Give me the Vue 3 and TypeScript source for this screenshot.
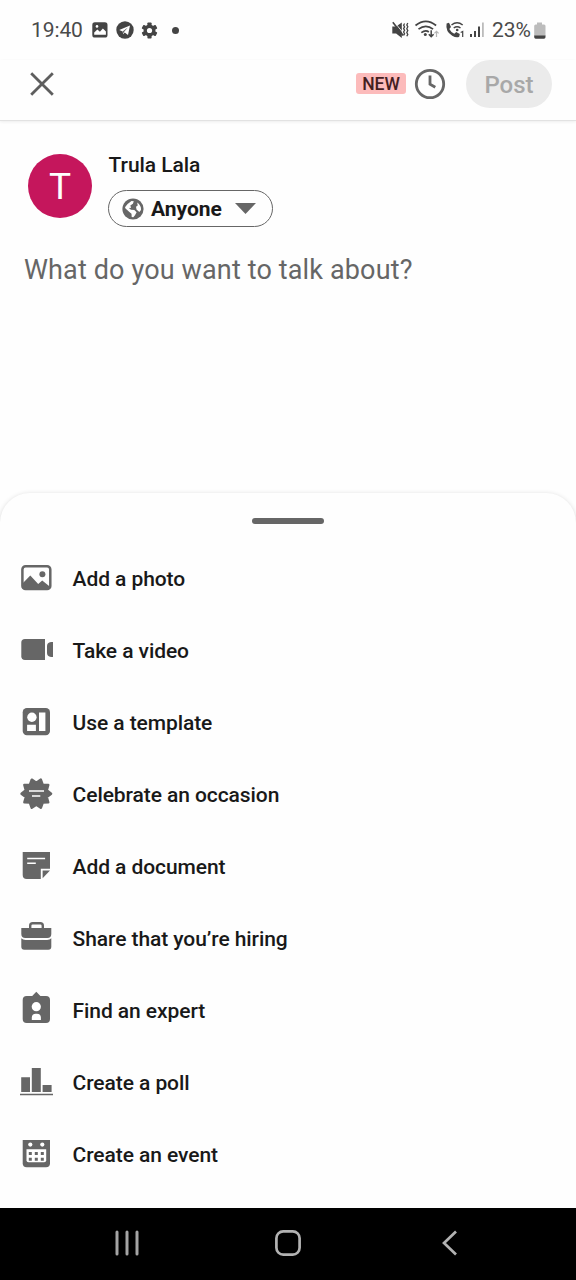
<script setup lang="ts">
interface MenuItem {
  id: string
  label: string
}

const items: MenuItem[] = [
  { id: 'photo', label: 'Add a photo' },
  { id: 'video', label: 'Take a video' },
  { id: 'template', label: 'Use a template' },
  { id: 'occasion', label: 'Celebrate an occasion' },
  { id: 'document', label: 'Add a document' },
  { id: 'hiring', label: 'Share that you’re hiring' },
  { id: 'expert', label: 'Find an expert' },
  { id: 'poll', label: 'Create a poll' },
  { id: 'event', label: 'Create an event' },
]

// Outline of the pointed badge, centred on (cx, cy).
function starPoints(cx: number, cy: number, outer: number, inner: number, tips: number): string {
  const pts: string[] = []
  for (let i = 0; i < tips * 2; i++) {
    const r = i % 2 ? inner : outer
    const a = (Math.PI * i) / tips
    pts.push(`${(cx + r * Math.cos(a)).toFixed(2)},${(cy + r * Math.sin(a)).toFixed(2)}`)
  }
  return pts.join(' ')
}

const badge = starPoints(18.3, 16.7, 14.8, 11, 10)
const gearTeeth = [0, 60, 120]
</script>

<template>
  <main class="screen">
    <div class="status">
      <span class="time">19:40</span>
      <svg class="s-image" width="16" height="16" viewBox="0 0 16 16">
        <rect x="0.3" y="0.3" width="15.2" height="15.2" rx="2.6" fill="#444" />
        <path d="M2.2 12.8V10.4l3.2-3 2.5 2.3 3-3.1 3 3v3.2z" fill="#fff" />
        <circle cx="5" cy="4.4" r="1.3" fill="#fff" />
      </svg>
      <svg class="s-plane" width="18" height="18" viewBox="0 0 18 18">
        <circle cx="9" cy="9" r="8.7" fill="#444" />
        <path d="M3.2 9.1 14 4.5 12 14 8.7 11.6 7.1 13.3 6.7 10.4z" fill="#fff" />
        <path d="m6.9 10.3 4.9-3.8-3.8 4.6-.9 1.7z" fill="#666" />
      </svg>
      <svg class="s-gear" width="17" height="17" viewBox="-8.5 -8.5 17 17">
        <rect v-for="a in gearTeeth" :key="a" x="-2.1" y="-8" width="4.2" height="16" rx="0.8" :transform="`rotate(${a})`" fill="#444" />
        <circle r="5.9" fill="#444" />
        <circle r="2.6" fill="#fff" />
      </svg>
      <i class="s-dot"></i>
      <svg class="s-right" width="100" height="24" viewBox="390 18 100 24">
        <path d="M392.300 26.500h3.800l5.700-4v15.400l-5.700-4.400h-3.800z" fill="#444" />
        <path d="m394.500 22.300 9.800 12" stroke="#fff" stroke-width="0.9" />
        <path d="m392.800 22.200 10.400 13.400" stroke="#444" stroke-width="1.600" />
        <path d="M404.600 23.500l-1 1.700 1 1.700-1 1.700 1 1.700-1 1.700 1 1.700-1 1.700M407.800 23l-1 1.900 1 1.900-1 1.900 1 1.900-1 1.900 1 1.900-1 1.900" fill="none" stroke="#444" stroke-width="1.300" />
        <g fill="none" stroke="#444" stroke-width="1.7">
          <path d="M415.500 25.500q10.300-8.300 20.600 0M418.500 29.200q7.300-5.800 14.600 0M421.300 32.600q4.400-3.200 7.500-.6" />
          <path d="M431.200 30.200v6.200M428.800 34.200l2.400 2.400 2.400-2.400" stroke-width="1.5" />
          <path d="M436.500 37v-5.400M434.400 33.400l2.100-2.100 2.100 2.100" stroke="#b5b5b5" stroke-width="1.2" />
        </g>
        <circle cx="425.300" cy="34.600" r="1.5" fill="#444" />
        <path d="M446.600 23.400l2.400-.6 2 4.300-1.700 1.900q1.700 3.400 5 4.700l1.900-1.700 3.600 2-.6 2.700q-2.800 1.400-7-1-7-4.400-5.600-12.300z" fill="#444" />
        <g fill="none" stroke="#444" stroke-width="1.5">
          <path d="M451.500 25q5.600-4.400 11.200 0M453.700 28q3.400-2.500 6.800 0" />
          <path d="M460.700 32.500l2-1v5.600" stroke-width="1.2" />
        </g>
        <circle cx="457.200" cy="30" r="1.3" fill="#444" />
        <path d="M470 34h2v3h-2zM474 31h2v6h-2zM478 26.500h2V37h-2z" fill="#444" />
        <path d="M482 22.500h1.800V37H482z" fill="#bbb" />
      </svg>
      <span class="percent">23%</span>
      <svg class="s-battery" width="12" height="18" viewBox="0 0 12 18">
        <path d="M3 .5h5v2h2a1.600 1.600 0 0 1 1.500 1.600V14H.2V4.100A1.600 1.600 0 0 1 1.700 2.500H3z" fill="#bcbcbc" />
        <path d="M.2 13.500h11.300v1.800a1.500 1.500 0 0 1-1.500 1.400H1.700a1.500 1.500 0 0 1-1.500-1.400z" fill="#444" />
      </svg>
    </div>

    <header class="toolbar">
      <svg class="close" width="26" height="26" viewBox="0 0 26 26">
        <path d="M2.200 2.200 23.800 23.800M23.800 2.200 2.200 23.800" stroke="#5e5e5e" stroke-width="2.800" />
      </svg>
      <span class="new">NEW</span>
      <svg class="clock" width="32" height="32" viewBox="0 0 32 32" fill="none" stroke="#666">
        <circle cx="16" cy="16" r="13.700" stroke-width="2.800" />
        <path d="M16 7.600v8.600l5.300 3.100" stroke-width="2.800" />
      </svg>
      <button class="post">Post</button>
    </header>

    <section class="composer">
      <div class="author">
        <div class="avatar">T</div>
        <div class="identity">
          <div class="name">Trula Lala</div>
          <div class="audience">
            <svg width="22" height="22" viewBox="0 0 22 22">
              <circle cx="11" cy="11" r="10.600" fill="#666" />
              <path d="M3 9.200 5.600 6 9.500 3l2.300.2-.9 2.600-2.600 1.600.8 2.300-2.200.3 2 1.800 3.400.3 2.300 2.200-1.600 3-1.700 2-1.600-.2-.2-3.300-2.400-2.100-3.600-3.200z" fill="#fff" />
              <path d="M15.200 4.400q4.200 3 3.800 7.500l-1.700 2-2.800-2.500-.5-2.600 1.700-1.300z" fill="#fff" />
            </svg>
            <span class="anyone">Anyone</span>
            <svg class="caret" width="21" height="11" viewBox="0 0 21 11"><path d="M0 0h21L10.500 11z" fill="#666" /></svg>
          </div>
        </div>
      </div>
      <p class="prompt">What do you want to talk about?</p>
    </section>

    <section class="sheet">
      <div class="handle"></div>
      <ul class="menu">
        <li v-for="item in items" :key="item.id">
          <svg width="36" height="36" viewBox="0 0 36 36" fill="#666">
            <g v-if="item.id === 'photo'">
              <rect x="4.400" y="5.300" width="27.900" height="22.800" rx="3.200" fill="none" stroke="#666" stroke-width="2.500" />
              <path d="M4.500 22.500 12.300 14.600 20.200 23l4-3.600 7.500 6.200v2H4.500z" />
              <circle cx="24.400" cy="13.200" r="3" />
            </g>
            <g v-else-if="item.id === 'video'">
              <path d="M7 6h20v21H7a3.700 3.700 0 0 1-3.700-3.700V9.700A3.700 3.700 0 0 1 7 6z" />
              <path d="M35 9v15h-2q-4-.5-4-4v-7q0-3.500 4-4z" />
            </g>
            <g v-else-if="item.id === 'template'">
              <rect x="4.700" y="3" width="27.300" height="27.200" rx="4.200" />
              <g fill="#fff">
                <circle cx="13.900" cy="12.200" r="4.700" />
                <path d="M9.100 19.700h8.800V26H9.100zM21 7.600h6.400V26H21z" />
              </g>
            </g>
            <g v-else-if="item.id === 'occasion'">
              <polygon :points="badge" stroke="#666" stroke-width="2.400" stroke-linejoin="round" />
              <path d="M11 14.100h15M14 18.900h8.300" stroke="#fff" stroke-width="1.500" />
            </g>
            <g v-else-if="item.id === 'document'">
              <path d="M4.700 3H32v16.800h-9.200V30H8.700a4 4 0 0 1-4-4z" />
              <path d="M24.600 21.500H32L24.600 29.300z" />
              <path d="M9.200 9.600h17.900M9.200 14.300h8.600" stroke="#fff" stroke-width="1.500" />
            </g>
            <g v-else-if="item.id === 'hiring'">
              <path d="M12.200 7.500V4.800a2.500 2.500 0 0 1 2.500-2.500h7.600a2.500 2.500 0 0 1 2.500 2.500v2.700" fill="none" stroke="#666" stroke-width="2.400" />
              <path d="M3.300 7h30v6a4 4 0 0 1-4 4h-22a4 4 0 0 1-4-4z" />
              <path d="M3.300 17.300q1.500 1.700 4.200 1.700h21.600q2.700 0 4.200-1.700v8.400a3 3 0 0 1-3 3h-24a3 3 0 0 1-3-3z" />
            </g>
            <g v-else-if="item.id === 'expert'">
              <path d="M8.700 3h5.500l4.100-4.200L22.400 3H28a4 4 0 0 1 4 4v19a4 4 0 0 1-4 4H8.700a4 4 0 0 1-4-4V7a4 4 0 0 1 4-4z" />
              <circle cx="18.300" cy="13.700" r="4.600" fill="#fff" />
              <path d="M13.800 27v-2.300a4 4 0 0 1 4-4h1.100a4 4 0 0 1 4 4V27z" fill="#fff" />
            </g>
            <path v-else-if="item.id === 'poll'" d="M3.200 12.200H12V27H3.200zM13.800 3h9v24h-9zM24.600 20h9v7h-9zM2 28.700h33v1.500H2z" />
            <g v-else>
              <path d="M4.700 3H32v23.200a4 4 0 0 1-4 4H8.700a4 4 0 0 1-4-4z" />
              <path d="M8.500 12.200h19.700v11a2 2 0 0 1-2 2H10.500a2 2 0 0 1-2-2z" fill="#fff" />
              <circle cx="12.300" cy="7.600" r="2.100" fill="#fff" />
              <circle cx="24.300" cy="7.600" r="2.100" fill="#fff" />
              <path d="M10.800 14.900h3v3h-3zM16.800 14.900h3v3h-3zM22.800 14.900h3v3h-3zM10.800 20.700h3v3h-3zM16.800 20.700h3v3h-3zM22.800 20.700h3v3h-3z" />
            </g>
          </svg>
          <span>{{ item.label }}</span>
        </li>
      </ul>
    </section>

    <nav class="navbar">
      <svg width="26" height="26" viewBox="0 0 26 26"><path d="M3 2v22M13 2v22M23 2v22" stroke="#a4a4a4" stroke-width="3" stroke-linecap="round" /></svg>
      <svg width="28" height="28" viewBox="0 0 28 28"><rect x="2.400" y="2.400" width="23.200" height="23.200" rx="6.800" fill="none" stroke="#b2b2b2" stroke-width="2.700" /></svg>
      <svg width="26" height="26" viewBox="0 0 26 26"><path d="M20 1.500 8 13l12 11.500" fill="none" stroke="#b2b2b2" stroke-width="2.700" /></svg>
    </nav>
  </main>
</template>

<style>
body {
  background: #fefefe;
}
</style>

<style scoped>
.screen {
  width: 576px;
  height: 1280px;
  display: flex;
  flex-direction: column;
  overflow: hidden;
  background: #fefefe;
  color: #191919;
  font-family: Roboto, "Liberation Sans", sans-serif;
  white-space: nowrap;
}
.screen svg {
  display: block;
  flex: none;
  overflow: visible;
}
.status {
  height: 60px;
  flex: none;
  display: flex;
  align-items: center;
  padding: 0 30px 0 31px;
  box-sizing: border-box;
  color: #4a4a4a;
  font-size: 21px;
}
.time {
  width: 60.5px;
  letter-spacing: -0.1px;
}
.s-plane {
  margin-left: 8px;
}
.s-gear {
  margin-left: 7.500px;
}
.s-dot {
  width: 7px;
  height: 7px;
  margin-left: 14px;
  border-radius: 50%;
  background: #444;
}
.s-right {
  margin-left: auto;
}
.percent {
  width: 42px;
  margin-left: 2px;
}
.s-battery {
  margin-top: 1px;
}
.toolbar {
  height: 60px;
  flex: none;
  display: flex;
  align-items: flex-start;
  padding: 0 24px 0 29px;
  border-bottom: 1px solid #e2e2e2;
  box-shadow: 0 1px 3px rgba(0, 0, 0, 0.07);
}
.close {
  margin-top: 11px;
}
.new {
  width: 50px;
  height: 21px;
  margin: 13px 8px 0 auto;
  border-radius: 3px;
  background: #fcbbbb;
  color: #44201f;
  font-size: 17.500px;
  font-weight: 500;
  line-height: 22px;
  text-align: center;
}
.clock {
  margin-top: 8px;
}
.post {
  width: 86px;
  height: 48px;
  margin-left: 20px;
  padding: 2px 0 0;
  border: 0;
  border-radius: 24px;
  background: #ebebeb;
  color: #a8a8a8;
  font: 500 24px Roboto, sans-serif;
}
.composer {
  height: 372px;
  flex: none;
  box-sizing: border-box;
  padding: 30px 24px 0;
}
.author {
  display: flex;
  gap: 16px;
  padding-left: 4px;
}
.avatar {
  width: 64px;
  height: 64px;
  margin-top: 3px;
  border-radius: 50%;
  background: #c5165c;
  color: #fff;
  font-size: 37px;
  line-height: 65px;
  text-align: center;
}
.name {
  height: 39px;
  padding-left: 0.500px;
  font-size: 21px;
  font-weight: 500;
  line-height: 28px;
  letter-spacing: -0.05px;
}
.audience {
  width: 165px;
  height: 37px;
  box-sizing: border-box;
  display: flex;
  align-items: center;
  padding: 0 16px 0 12.500px;
  border: 1.500px solid #666;
  border-radius: 19px;
  font-size: 21px;
  font-weight: 700;
}
.anyone {
  margin-left: 7.500px;
}
.caret {
  margin-left: auto;
}
.prompt {
  margin: 25px 0 0;
  color: #666;
  font-size: 27px;
  line-height: 36px;
  letter-spacing: 0.140px;
}
.sheet {
  height: 715px;
  flex: none;
  box-sizing: border-box;
  padding-top: 25px;
  border-radius: 30px 30px 0 0;
  background: #fefefe;
  box-shadow: 0 1px 5px rgba(0, 0, 0, 0.16);
}
.handle {
  width: 72px;
  height: 6px;
  margin: 0 auto 19px;
  border-radius: 3px;
  background: #666;
}
.menu {
  margin: 0;
  padding: 0;
  list-style: none;
}
.menu li {
  height: 72px;
  display: flex;
  align-items: center;
  gap: 18.600px;
  padding-left: 18px;
  font-size: 21px;
  font-weight: 500;
  letter-spacing: -0.080px;
}
.navbar {
  height: 72px;
  flex: none;
  display: flex;
  align-items: center;
  justify-content: space-between;
  box-sizing: border-box;
  padding: 0 114px 2px;
  background: #000;
}
</style>
